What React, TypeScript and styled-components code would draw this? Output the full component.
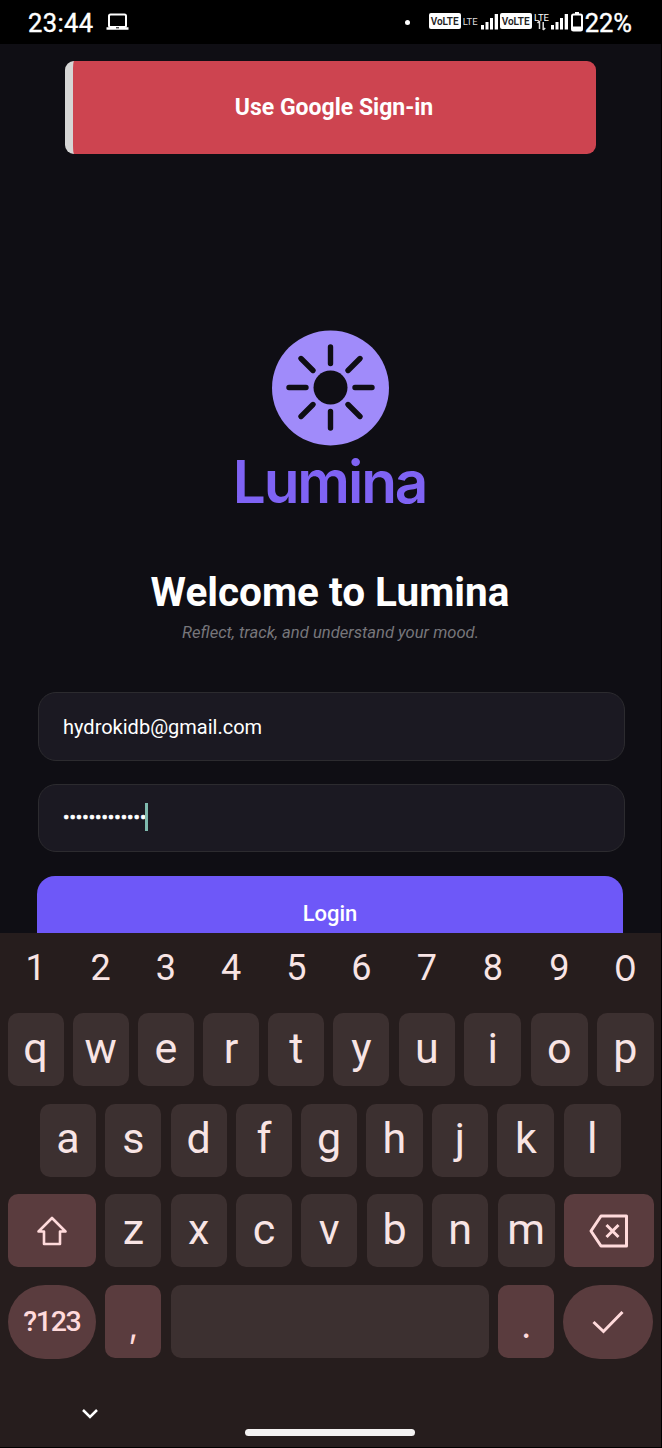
import React from "react";
import styled, { createGlobalStyle } from "styled-components";

const Global = createGlobalStyle`
  * { box-sizing: border-box; }
  body { margin: 0; background: #000; }
`;

const Phone = styled.div`
  width: 662px;
  height: 1448px;
  padding: 0 1px 1px 0;
  background: #000;
  display: flex;
  flex-direction: column;
  overflow: hidden;
  font-family: Roboto, sans-serif;
  color: #fff;
`;

const StatusBar = styled.header`
  flex: none;
  height: 44px;
  padding: 0 29px 0 28px;
  display: flex;
  align-items: center;
  justify-content: space-between;
`;

const StatusGroup = styled.div`
  display: flex;
  align-items: center;
`;

const Clock = styled.span`
  font-size: 25.5px;
  font-weight: 400;
  -webkit-text-stroke: 0.4px #fff;
  line-height: 44px;
  letter-spacing: 0.4px;
  margin: 1px 12px 0 0;
`;

const Battery = styled(Clock)`
  margin: 2px 0 0 1px;
  letter-spacing: 0;
`;

const Dot = styled.span`
  width: 5px;
  height: 5px;
  border-radius: 50%;
  background: #fff;
  margin-right: 19px;
`;

const Volte = styled.span`
  width: 32px;
  height: 16px;
  border-radius: 2px;
  background: #fff;
  color: #222;
  font-size: 10px;
  font-weight: 600;
  line-height: 17px;
  text-align: center;
  margin-top: -2px;
`;

const Lte = styled.span`
  width: 19px;
  font-size: 9.5px;
  line-height: 16px;
  text-align: center;
  color: #ddd;
`;

const Screen = styled.main`
  flex: none;
  height: 889px;
  background: #0f0e14;
  padding: 17px 37px 0;
  display: flex;
  flex-direction: column;
  align-items: center;
  overflow: hidden;
`;

const Toast = styled.div`
  flex: none;
  width: 531px;
  height: 93px;
  border-radius: 9px;
  border-left: 8px solid #d6d6d6;
  background: #cd4450;
  display: flex;
  align-items: center;
  justify-content: center;
  font-size: 23px;
  font-weight: 700;
  padding-right: 1px;
`;

const Logo = styled.svg`
  flex: none;
  margin-top: 176px;
`;

const Wordmark = styled.div`
  font-family: Inter, sans-serif;
  font-size: 58.5px;
  font-weight: 600;
  line-height: 60px;
  letter-spacing: -2.1px;
  color: #7f63f4;
  margin: 6px 2px 0 0;
`;

const Title = styled.h1`
  margin: 56px 1px 0 0;
  font-size: 40.5px;
  font-weight: 700;
  line-height: 48px;
`;

const Tagline = styled.p`
  margin: 6px 0 48px;
  font-size: 16.6px;
  font-style: italic;
  line-height: 22px;
  color: #77767b;
`;

const Field = styled.div<{ $height: number }>`
  flex: none;
  width: 587px;
  height: ${(p) => p.$height}px;
  margin: 0 0 23.5px 1px;
  padding: 1px 0 0 24.5px;
  border: 1px solid #2c2b2f;
  border-radius: 18px;
  background: #1b1922;
  display: flex;
  align-items: center;
  font-size: 20px;
`;

const Secret = styled.span`
  font-size: 19px;
  line-height: 26px;
  -webkit-text-stroke: 0.6px #fff;
`;

const Caret = styled.span`
  width: 3px;
  height: 28px;
  background: #7fb9ae;
  margin: -2px 0 0 -1px;
`;

const LoginButton = styled.button`
  flex: none;
  width: 586px;
  height: 74px;
  margin: 1px 1px 0 0;
  padding: 0;
  border: 0;
  border-radius: 18px;
  background: #6e58f8;
  color: #fff;
  font: 500 22px Roboto, sans-serif;
`;

const Keyboard = styled.section`
  flex: 1;
  background: #261d1d;
  display: flex;
  flex-direction: column;
  padding-left: 7.5px;
  color: #f8e4e4;
`;

const NumberRow = styled.div`
  height: 71px;
  margin-bottom: 9px;
  display: flex;
  gap: 9.2px;
`;

const NumberKey = styled.span<{ $width: number; $wide?: boolean }>`
  flex: 0 0 ${(p) => p.$width}px;
  font-family: ${(p) => (p.$wide ? "Inter" : "Roboto")}, sans-serif;
  font-size: 36px;
  line-height: 70px;
  text-align: center;
`;

const KeyRow = styled.div<{ $inset?: number }>`
  height: 73px;
  margin-bottom: 17.5px;
  padding-left: ${(p) => p.$inset ?? 0}px;
  display: flex;
  gap: 9.2px;
`;

const Key = styled.div<{ $width: number; $accent?: boolean; $round?: boolean; $label?: boolean }>`
  flex: 0 0 ${(p) => p.$width}px;
  height: ${(p) => (p.$round ? 74 : 73)}px;
  border-radius: ${(p) => (p.$round ? 37 : 10)}px;
  background: ${(p) => (p.$accent ? "#5a3c3e" : "#3c3030")};
  color: ${(p) => (p.$accent ? "#ffdadb" : "#f8e4e4")};
  display: flex;
  align-items: center;
  justify-content: center;
  font-size: ${(p) => (p.$label ? 28.5 : 43)}px;
  font-weight: ${(p) => (p.$label ? 500 : 400)};
  letter-spacing: ${(p) => (p.$label ? -1.3 : 0)}px;
  line-height: 70px;
`;

const Letter = styled.span<{ $lift?: boolean }>`
  height: 73px;
  line-height: ${(p) => (p.$lift ? 68 : 70)}px;
`;

const Punctuation = styled.span`
  font-family: Inter, sans-serif;
  font-size: 34px;
  padding-top: 9px;
`;

const NavBar = styled.div`
  flex: 1;
  padding: 32px 0 0 72.5px;
  display: flex;
  align-items: flex-start;
`;

const HomePill = styled.div`
  width: 170px;
  height: 7px;
  border-radius: 4px;
  background: #f4f2f2;
  margin: 22px 0 0 145px;
`;

const SignalBars = () => (
  <svg width="20" height="18" viewBox="0 0 20 18" fill="#fff">
    <rect x="1" y="12" width="3" height="4.5" />
    <rect x="5.5" y="9" width="3" height="7.5" />
    <rect x="10" y="5" width="3" height="11.5" />
    <rect x="14.7" y="1" width="3.3" height="15.5" />
  </svg>
);

// Keys grow slightly toward the right edge of the board.
const topRow: [string, number][] = [
  ["q", 56], ["w", 56], ["e", 56], ["r", 56], ["t", 56],
  ["y", 56], ["u", 56.5], ["i", 57], ["o", 57.5], ["p", 56.5],
];
const homeRow: [string, number][] = [
  ["a", 56.1], ["s", 56.1], ["d", 56.1], ["f", 56.1], ["g", 56.1],
  ["h", 56.1], ["j", 56.6], ["k", 57], ["l", 57],
];
const bottomRow: [string, number][] = [
  ["z", 56.1], ["x", 56.1], ["c", 56.1], ["v", 56.1], ["b", 56.1], ["n", 56.6], ["m", 57],
];

const letters = (row: [string, number][], lift = false) =>
  row.map(([c, w]) => (
    <Key key={c} $width={w}>
      <Letter $lift={lift}>{c}</Letter>
    </Key>
  ));

export default function App() {
  return (
    <Phone>
      <Global />
      <StatusBar>
        <StatusGroup>
          <Clock>23:44</Clock>
          <svg width="23" height="18" viewBox="0 0 23 18" fill="none" stroke="#fff">
            <rect x="3" y="1.500" width="17" height="12.500" rx="1.500" strokeWidth="2" />
            <path d="M0.500 15.500H22.500" strokeWidth="2.500" />
            <path d="M10 14.800H13" stroke="#000" strokeWidth="1" />
          </svg>
        </StatusGroup>
        <StatusGroup>
          <Dot />
          <Volte>VoLTE</Volte>
          <Lte>LTE</Lte>
          <SignalBars />
          <Volte>VoLTE</Volte>
          <svg width="18" height="22" viewBox="0 0 18 22">
            <text x="2" y="10" fill="#fff" fontSize="9.5" fontFamily="Roboto, sans-serif" textLength="15">LTE</text>
            <path d="M7.5 18V10M5.5 12L7.5 10M11.2 11V19M13.2 17L11.2 19" stroke="#ddd" strokeWidth="1.5" fill="none" />
          </svg>
          <SignalBars />
          <svg width="14" height="22" viewBox="0 0 14 22">
            <path d="M5 1H9V3H5Z" fill="#fff" />
            <rect x="2" y="3.5" width="10" height="16" rx="1.5" fill="none" stroke="#fff" strokeWidth="2" />
            <path d="M2 15.5H12V20H2Z" fill="#fff" />
          </svg>
          <Battery>22%</Battery>
        </StatusGroup>
      </StatusBar>

      <Screen>
        <Toast>Use Google Sign-in</Toast>
        <Logo width="117" height="116" viewBox="0 0 117 116">
          <ellipse cx="58.5" cy="58" rx="58.5" ry="57.5" fill="#a08bfa" />
          <circle cx="58.5" cy="57.5" r="17" fill="#0f0e14" />
          <path
            d="M58.5 17V33.5M58.5 81.5V98M17 57.5H34M83 57.5H100M29 28.5L41 40.5M88 28.5L76 40.5M29 86.5L41 74.5M88 86.5L76 74.5"
            stroke="#0f0e14"
            strokeWidth="5.4"
            strokeLinecap="round"
          />
        </Logo>
        <Wordmark>Lumina</Wordmark>
        <Title>Welcome to Lumina</Title>
        <Tagline>Reflect, track, and understand your mood.</Tagline>
        <Field $height={68.5}>hydrokidb@gmail.com</Field>
        <Field $height={67.5}>
          <Secret>•••••••••••••</Secret>
          <Caret />
        </Field>
        <LoginButton>Login</LoginButton>
      </Screen>

      <Keyboard>
        <NumberRow>
          {topRow.map(([c, w], i) => (
            <NumberKey key={c} $width={w} $wide={i === 9}>{(i + 1) % 10}</NumberKey>
          ))}
        </NumberRow>
        <KeyRow>{letters(topRow)}</KeyRow>
        <KeyRow $inset={32.5}>{letters(homeRow, true)}</KeyRow>
        <KeyRow>
          <Key $accent $width={88.7}>
            <svg width="32" height="30" viewBox="0 0 32 30" fill="none" stroke="#ffdadb" strokeWidth="2.6" strokeLinejoin="round">
              <path d="M16 2L29.5 15.5H24V28H8V15.5H2.5Z" />
            </svg>
          </Key>
          {letters(bottomRow)}
          <Key $accent $width={90}>
            <svg width="40" height="34" viewBox="0 0 40 34" fill="none" stroke="#ffdadb" strokeWidth="3" strokeLinejoin="round">
              <path d="M12 2H37.5V32H12L2 17Z" />
              <path d="M17.5 11L29.5 23M29.5 11L17.5 23" />
            </svg>
          </Key>
        </KeyRow>
        <KeyRow>
          <Key $accent $round $label $width={88.7}>?123</Key>
          <Key $accent $width={56.1}><Punctuation>,</Punctuation></Key>
          <Key $width={318.2} />
          <Key $accent $width={56.2}><Punctuation>.</Punctuation></Key>
          <Key $accent $round $width={90}>
            <svg width="32" height="24" viewBox="0 0 32 24" fill="none" stroke="#ffdadb" strokeWidth="3">
              <path d="M1.5 12L11.5 21.5L30.5 2" />
            </svg>
          </Key>
        </KeyRow>
        <NavBar>
          <svg width="20" height="14" viewBox="0 0 20 14" fill="none" stroke="#fff" strokeWidth="2.5">
            <path d="M3 3L10 10L17 3" />
          </svg>
          <HomePill />
        </NavBar>
      </Keyboard>
    </Phone>
  );
}
